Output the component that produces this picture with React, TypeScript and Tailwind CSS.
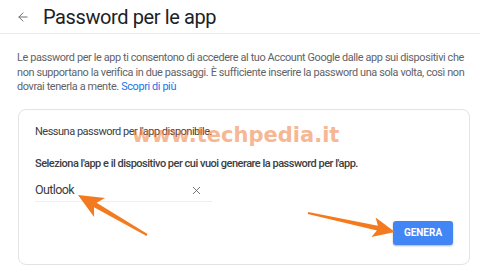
import { ArrowLeft, X } from "lucide-react";

export default function App() {
  return (
    <div className="relative h-[278px] w-[480px] overflow-hidden bg-white font-['Roboto',sans-serif]">
      <div className="flex h-[34px] items-center border-b border-[#ececec] pl-[16px]">
        <ArrowLeft size={14} strokeWidth={1.7} className="text-[#6b6f74]" />
        <h1 className="ml-[13px] text-[20px] leading-none tracking-[-0.4px] text-[#202124]">Password per le app</h1>
      </div>

      <p className="pl-[17px] pr-[12px] pt-[17px] text-[10.9px] leading-[14.5px] tracking-[-0.38px] text-[#5f6368]">
        Le password per le app ti consentono di accedere al tuo Account Google dalle app sui dispositivi che non
        supportano la verifica in due passaggi. È sufficiente inserire la password una sola volta, così non dovrai
        tenerla a mente. <span className="text-[#1a73e8]">Scopri di più</span>
      </p>

      <div className="ml-[18px] mr-[10px] mt-[14px] rounded-lg border border-[#e3e3e3] pt-[14px] pb-[19px] pl-[16px] pr-[16px]">
        <p className="text-[11px] leading-[15px] tracking-[-0.5px] text-[#3c4043]">Nessuna password per l'app disponibile.</p>
        <p className="mt-[17px] text-[11px] font-medium leading-[15px] tracking-[-0.5px] text-[#3c4043]">
          Seleziona l'app e il dispositivo per cui vuoi generare la password per l'app.
        </p>
        <div className="mt-[11px] flex h-[20px] w-[177px] items-center justify-between border-b border-[#eeeeee] pb-[1px]">
          <span className="text-[12.5px] tracking-[-0.6px] text-[#3c4043]">Outlook</span>
          <X size={13} strokeWidth={1.6} className="mr-[9px] text-[#5f6368]" />
        </div>
        <div className="mt-[19px] flex justify-end">
          <button className="h-[24px] w-[60px] rounded-[3px] bg-[#4285f4] text-[10px] font-bold text-white shadow-[0_1px_2px_rgba(0,0,0,0.3)]">
            GENERA
          </button>
        </div>
      </div>

      {/* watermark */}
      <div className="pointer-events-none absolute left-[132px] top-[125px] font-['DejaVu_Sans',sans-serif] text-[21px] font-bold leading-none text-[#f07d3c] opacity-55">
        www.techpedia.it
      </div>

      {/* arrows */}
      <svg className="pointer-events-none absolute inset-0" width="480" height="278" viewBox="0 0 480 278">
        <polygon
          fill="#f47a1f"
          points="78,195 105.1,198 96.6,202.8 147.5,234.1 146.5,235.9 94,207.2 94.1,217"
        />
        <polygon
          fill="#f47a1f"
          points="395,232 375.6,217.5 377.9,225.8 308.2,212 307.8,214 376.9,230.6 371.4,237.1"
        />
      </svg>
    </div>
  );
}
